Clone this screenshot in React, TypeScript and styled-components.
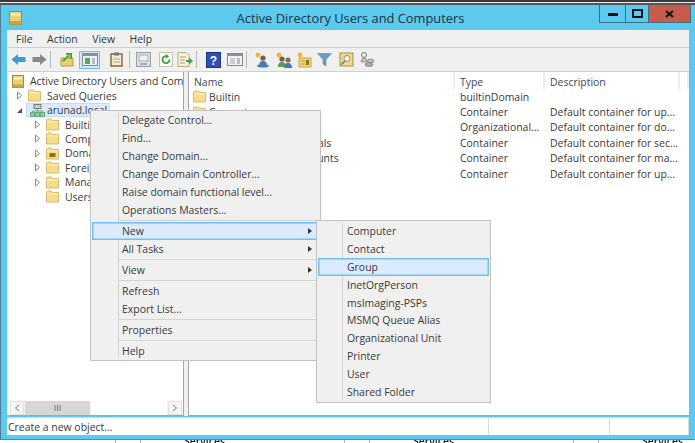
import React from "react";
import styled, { createGlobalStyle } from "styled-components";

const Global = createGlobalStyle`
  html, body { margin: 0; padding: 0; background: #fff; overflow: hidden; }
  * { box-sizing: border-box; }
`;

const Page = styled.div`
  position: relative;
  width: 695px;
  height: 443px;
  display: flex;
  flex-direction: column;
  overflow: hidden;
  filter: blur(0.55px);
  font-family: "Open Sans", "Noto Sans", sans-serif;
  font-size: 10.45px;
  color: #333;
`;
const TopStrip = styled.div`
  height: 5px;
  flex: none;
  background: linear-gradient(#3a3a3a 0 2px, #e8e8e8 2px 3px, #555 3px 5px);
`;
const BottomStrip = styled.div`
  height: 3px;
  flex: none;
  display: grid;
  grid-template-columns: repeat(3, 229px);
  padding-left: 115px;
  background: #fff;
  overflow: hidden;
`;
const StripCell = styled.div`
  border-left: 1px solid #b5b5b5;
`;
const StripInner = styled.div`
  margin-left: 24px;
  padding-left: 43px;
  height: 14px;
  margin-top: -6px;
  line-height: 14px;
  border-left: 1px solid #b5b5b5;
  color: #222;
  font-weight: 600;
`;
const Window = styled.div`
  flex: 1;
  min-height: 0;
  display: flex;
  flex-direction: column;
  background: #5ccaee;
  border-left: 1px solid #4a7f95;
  border-right: 1px solid #5ccaee;
  border-bottom: 1px solid #4a8ea8;
  padding: 0 5px 4px 6px;
`;
const TitleBar = styled.div`
  position: relative;
  height: 25px;
  flex: none;
  display: flex;
  align-items: center;
  justify-content: center;
  padding-left: 5px;
  font-size: 12.85px;
  color: #17323f;
`;
const AppIcon = styled.svg`
  position: absolute;
  left: 2px;
  top: 6px;
`;
const Controls = styled.div`
  position: absolute;
  right: -2px;
  top: 0;
  height: 18px;
  display: flex;
  border: 1px solid #3e6f84;
  border-top: none;
`;
const Control = styled.div<{ $w: number; $red?: boolean }>`
  width: ${(p) => p.$w}px;
  display: flex;
  align-items: center;
  justify-content: center;
  background: ${(p) => (p.$red ? "#c65b4e" : "transparent")};
  & + & { border-left: 1px solid #3e6f84; }
`;
const MenuBar = styled.div`
  height: 18px;
  flex: none;
  display: flex;
  align-items: center;
  gap: 14.5px;
  padding-left: 9px;
  background: #f0f0f0;
  border-bottom: 1px solid #cfcfcf;
  color: #2f3a40;
`;
const Toolbar = styled.div`
  height: 24px;
  flex: none;
  display: flex;
  align-items: center;
  padding-left: 1px;
  background: #f0f0f0;
  border-bottom: 1px solid #d0d0d0;
`;
const ToolSlot = styled.div<{ $m?: number; $active?: boolean }>`
  width: 21px;
  height: 18px;
  flex: none;
  margin-left: ${(p) => p.$m ?? 0}px;
  display: flex;
  align-items: center;
  justify-content: center;
  background: ${(p) => (p.$active ? "#d5e6f6" : "transparent")};
  border: ${(p) => (p.$active ? "1.5px solid #74bce8" : "none")};
`;
const ToolSep = styled.div<{ $m?: number }>`
  width: 1px;
  height: 17px;
  flex: none;
  margin-left: ${(p) => p.$m ?? 0}px;
  background: #b9b9b9;
`;
const Panes = styled.div`
  flex: 1;
  min-height: 0;
  display: flex;
  gap: 4px;
  background: #f0f0f0;
`;
const LeftPane = styled.div`
  width: 177px;
  flex: none;
  display: flex;
  flex-direction: column;
  background: #fff;
  border-right: 1px solid #a6a6a6;
  border-bottom: 1px solid #a6a6a6;
`;
const Tree = styled.div`
  flex: 1;
  padding-top: 2px;
`;
const TreeRow = styled.div<{ $indent: number }>`
  height: 14.45px;
  display: flex;
  align-items: center;
  padding-left: ${(p) => p.$indent}px;
  white-space: nowrap;
  overflow: hidden;
  svg { flex: none; }
`;
const Expander = styled.div`
  width: 15px;
  flex: none;
  display: flex;
  justify-content: center;
  padding-right: 2px;
`;
const TreeLabel = styled.span`
  margin-left: 6px;
  color: #3a3a3a;
`;
const SelectedNode = styled.div`
  display: flex;
  align-items: center;
  height: 14px;
  width: 84px;
  flex: none;
  margin-left: -2px;
  padding-left: 3px;
  background: #dbe9fb;
  border: 1px solid #c3dcf6;
`;
const NodeLabel = styled.span`
  margin-left: 2px;
  color: #3a3a3a;
`;
const HScroll = styled.div`
  height: 14px;
  flex: none;
  display: flex;
  align-items: stretch;
  gap: 1px;
  margin: 0 1px 0 3px;
  background: #f2f2f2;
`;
const ScrollArrow = styled.div`
  width: 14px;
  display: flex;
  align-items: center;
  justify-content: center;
  background: #f6f6f6;
  border: 1px solid #e2e2e2;
`;
const ScrollThumb = styled.div`
  width: 65px;
  display: flex;
  align-items: center;
  justify-content: center;
  background: #d6d6d6;
`;
const ScrollTrack = styled.div`
  flex: 1;
  background: #fff;
`;
const RightPane = styled.div`
  flex: 1;
  min-width: 0;
  display: flex;
  flex-direction: column;
  background: #fff;
  border-left: 1px solid #a6a6a6;
  border-bottom: 1px solid #a6a6a6;
`;
const HeaderRow = styled.div`
  height: 17px;
  flex: none;
  display: grid;
  grid-template-columns: 266px 90px 135px 1fr;
  color: #3c4a55;
`;
const HeaderCell = styled.div`
  display: flex;
  align-items: center;
  padding: 2px 0 0 5px;
  border-right: 2px solid #eeeeee;
`;
const ListRow = styled.div`
  height: 15.4px;
  display: grid;
  grid-template-columns: 266px 90px 1fr;
  align-items: center;
  white-space: nowrap;
`;
const NameCell = styled.div`
  display: flex;
  align-items: center;
  padding-left: 4px;
  overflow: hidden;
  svg { flex: none; }
`;
const NameLabel = styled.span`
  margin-left: 3px;
  color: #3a3a3a;
`;
const PlainCell = styled.div`
  padding-left: 5px;
  color: #3a3a3a;
  overflow: hidden;
`;
const StatusBar = styled.div`
  height: 18px;
  flex: none;
  margin-top: 1px;
  display: grid;
  grid-template-columns: 482px 121px 1fr;
  background: #fff;
  border-top: 1px solid #d8d8d8;
`;
const StatusCell = styled.div`
  display: flex;
  align-items: center;
  padding-left: 1px;
  border-right: 1px solid #dcdcdc;
  color: #3a3a3a;
`;
const Menu = styled.div<{ $x: number; $y: number; $w: number; $gutter: number; $pad: number }>`
  position: absolute;
  left: ${(p) => p.$x}px;
  top: ${(p) => p.$y}px;
  width: ${(p) => p.$w}px;
  padding: ${(p) => p.$pad}px 1px;
  background: #f0f0f0;
  border: 1.5px solid #c2c2c2;
  &::before {
    content: "";
    position: absolute;
    top: 2px;
    bottom: 2px;
    left: ${(p) => p.$gutter}px;
    width: 1px;
    background: #d2d2d2;
  }
`;
const MenuItem = styled.div<{ $on?: boolean; $h: number; $text: number }>`
  position: relative;
  height: ${(p) => p.$h}px;
  display: flex;
  align-items: center;
  justify-content: space-between;
  padding: 0 7px 0 ${(p) => p.$text}px;
  background: ${(p) => (p.$on ? "#dbeafc" : "transparent")};
  box-shadow: ${(p) => (p.$on ? "inset 0 0 0 1.5px #74c0f2" : "none")};
  color: #3a3a3a;
  white-space: nowrap;
`;
const MenuSep = styled.div<{ $gutter: number }>`
  height: 3px;
  margin-left: ${(p) => p.$gutter}px;
  display: flex;
  align-items: center;
  &::after {
    content: "";
    flex: 1;
    height: 1.5px;
    background: #d4d4d4;
  }
`;
const Arrow = styled.span`
  width: 0;
  height: 0;
  border-left: 4px solid #333;
  border-top: 3px solid transparent;
  border-bottom: 3px solid transparent;
`;

const Folder = ({ lock }: { lock?: boolean }) => (
  <svg width="13" height="13" viewBox="0 0 13 13">
    <path d="M0.5 3V12H12.5V2.5H6.5L5.5 1H1.5L0.5 2Z" fill="#f7dc8c" stroke="#d8bb6c" />
    <path d="M1 4H12" stroke="#fdf0c2" />
    {lock && <rect x="3.5" y="6" width="6" height="4" fill="#8a7320" />}
  </svg>
);
const Tri = ({ filled }: { filled?: boolean }) => (
  <svg width="7" height="9" viewBox="0 0 7 9">
    {filled ? (
      <path d="M6 2V7H1Z" fill="#555" />
    ) : (
      <path d="M1.5 1L5.5 4.5L1.5 8Z" fill="#fff" stroke="#8a8a8a" />
    )}
  </svg>
);
const BookIcon = () => (
  <svg width="12" height="13" viewBox="0 0 12 13">
    <rect x="0.5" y="0.5" width="11" height="12" fill="#eccf72" stroke="#a58c3c" />
    <rect x="2" y="2.5" width="8" height="2" fill="#fdf4c8" />
    <rect x="0.5" y="9.5" width="11" height="3" fill="#c4a447" />
  </svg>
);
const DomainIcon = () => (
  <svg width="15" height="13" viewBox="0 0 15 13">
    <rect x="4" y="0.5" width="7" height="4" fill="#c9ced2" stroke="#777" />
    <path d="M7.5 4.5V7M2.5 9V7H12.5V9" stroke="#6a7" fill="none" />
    <rect x="0.5" y="8.5" width="4" height="4" fill="#9ccf7a" stroke="#6a8" />
    <rect x="5.5" y="8.5" width="4" height="4" fill="#9ccf7a" stroke="#6a8" />
    <rect x="10.5" y="8.5" width="4" height="4" fill="#9ccf7a" stroke="#6a8" />
  </svg>
);
const BackArrow = ({ color, flip }: { color: string; flip?: boolean }) => (
  <svg width="15" height="13" viewBox="0 0 15 13" style={flip ? { transform: "scaleX(-1)" } : undefined}>
    <path d="M0.5 6.5L7 1V4H14.5V9H7V12Z" fill={color} />
  </svg>
);
const UpFolder = () => (
  <svg width="15" height="15" viewBox="0 0 15 15">
    <path d="M1 6H13V14H1Z" fill="#e9cf6e" stroke="#b69a3f" />
    <path d="M3 9L9 3.5M6 2H11V7" stroke="#5aa02c" strokeWidth="2" fill="none" />
  </svg>
);
const PaneIcon = ({ green }: { green?: boolean }) => (
  <svg width="16" height="13" viewBox="0 0 16 13">
    <rect x="0.5" y="0.5" width="15" height="12" fill="#f2f2f2" stroke="#8b8b8b" />
    <rect x="1" y="1" width="14" height="2" fill="#8b9199" />
    <rect x="3" y="5" width="5" height="6" fill={green ? "#58a85a" : "#c8d0d8"} />
    <rect x="10" y="5" width="3" height="6" fill="#b5bcc4" />
  </svg>
);
const Clipboard = () => (
  <svg width="13" height="15" viewBox="0 0 13 15">
    <rect x="1" y="2" width="11" height="12" fill="#f4e9d3" stroke="#8a6a3d" strokeWidth="1.5" />
    <rect x="4" y="0.5" width="5" height="3" fill="#6f7a80" />
    <path d="M3 7H10M3 10H10" stroke="#b7a98f" />
  </svg>
);
const PropsIcon = () => (
  <svg width="15" height="15" viewBox="0 0 15 15">
    <rect x="0.5" y="0.5" width="14" height="14" fill="#dadee1" stroke="#9a9fa3" />
    <rect x="3" y="3" width="9" height="6" fill="#eef0f1" stroke="#aab" />
    <path d="M4 12H11" stroke="#7aa6c6" strokeWidth="1.5" />
  </svg>
);
const RefreshIcon = () => (
  <svg width="14" height="15" viewBox="0 0 14 15">
    <rect x="0.5" y="0.5" width="13" height="14" fill="#fbfbf4" stroke="#c4c4b4" />
    <path d="M10.5 7.5A3.5 3.5 0 1 1 8 4.2" fill="none" stroke="#3e9c3e" strokeWidth="1.8" />
    <path d="M7 2L10 4.5L7 6.5Z" fill="#3e9c3e" />
  </svg>
);
const ExportIcon = () => (
  <svg width="16" height="15" viewBox="0 0 16 15">
    <path d="M1 0.5H9L12 3.5V14.5H1Z" fill="#f8f3dc" stroke="#b9ad85" />
    <path d="M3 5H9M3 8H8M3 11H8" stroke="#a79f80" />
    <path d="M9 8H12V5.5L16 9L12 12.5V10H9Z" fill="#3fa53f" />
  </svg>
);
const HelpIcon = () => (
  <svg width="15" height="16" viewBox="0 0 15 16">
    <rect x="0.5" y="0.5" width="14" height="15" fill="#2c4fb0" stroke="#1b3488" />
    <text x="7.5" y="12.5" textAnchor="middle" fontSize="12" fontWeight="700" fill="#fff" fontFamily="Liberation Sans, sans-serif">?</text>
  </svg>
);
const Person = ({ x, y, shirt, head }: { x: number; y: number; shirt: string; head: string }) => (
  <g transform={`translate(${x} ${y})`}>
    <circle cx="4" cy="3" r="2.6" fill={head} />
    <path d="M0 11C0 7 2 6 4 6S8 7 8 11Z" fill={shirt} />
  </g>
);
const UserIcon = () => (
  <svg width="16" height="16" viewBox="0 0 16 16">
    <circle cx="3" cy="3" r="2.4" fill="#f2b33d" />
    <Person x={4} y={3} shirt="#3f7fb5" head="#7a5c3e" />
    <ellipse cx="8" cy="14" rx="6" ry="1.6" fill="#3f7fb5" />
  </svg>
);
const GroupIcon = () => (
  <svg width="16" height="16" viewBox="0 0 16 16">
    <circle cx="3" cy="3" r="2.4" fill="#f2b33d" />
    <Person x={2} y={4} shirt="#5c9c4e" head="#7a5c3e" />
    <Person x={8} y={5} shirt="#3f7fb5" head="#8a6c4e" />
  </svg>
);
const OuIcon = () => (
  <svg width="16" height="16" viewBox="0 0 16 16">
    <circle cx="3" cy="3" r="2.4" fill="#f2b33d" />
    <path d="M2 6H14V15H2Z" fill="#f3d873" stroke="#c2a544" />
    <rect x="9" y="8" width="3" height="5" fill="#8a7320" />
    <path d="M4 9H8M4 12H8" stroke="#b79c3f" />
  </svg>
);
const FilterIcon = () => (
  <svg width="15" height="15" viewBox="0 0 15 15">
    <path d="M0.5 1.5H14.5L9 7.5V14L6 12V7.5Z" fill="#6d9cc0" stroke="#5b88aa" strokeWidth="0.6" />
  </svg>
);
const FindIcon = () => (
  <svg width="15" height="15" viewBox="0 0 15 15">
    <rect x="1" y="1" width="13" height="13" fill="#efd98c" stroke="#a68f3f" />
    <circle cx="8" cy="6.5" r="3" fill="#fbf7e2" stroke="#8f8f7a" />
    <path d="M6 9L2.5 12.5" stroke="#7a7a68" strokeWidth="1.6" />
  </svg>
);
const GrayUsers = () => (
  <svg width="15" height="15" viewBox="0 0 15 15">
    <circle cx="4" cy="3" r="2.5" fill="none" stroke="#777" />
    <path d="M1 10C1 7 2.5 6 4 6S7 7 7 10Z" fill="#bdbdbd" stroke="#777" strokeWidth="0.6" />
    <ellipse cx="10.5" cy="9" rx="3.5" ry="2" fill="#bdbdbd" stroke="#777" strokeWidth="0.6" />
    <ellipse cx="9" cy="12.5" rx="4" ry="2" fill="#aaa" stroke="#777" strokeWidth="0.6" />
  </svg>
);

const treeChildren = [
  { label: "Builtin", exp: true },
  { label: "Computers", exp: true },
  { label: "Domain Controllers", exp: true, lock: true },
  { label: "ForeignSecurityPrincipals", exp: true },
  { label: "Managed Service Accounts", exp: true },
  { label: "Users", exp: false },
];
const rows = [
  { name: "Builtin", type: "builtinDomain", desc: "" },
  { name: "Computers", type: "Container", desc: "Default container for up..." },
  { name: "Domain Controllers", type: "Organizational...", desc: "Default container for do..." },
  { name: "ForeignSecurityPrincipals", type: "Container", desc: "Default container for sec..." },
  { name: "Managed Service Accounts", type: "Container", desc: "Default container for ma..." },
  { name: "Users", type: "Container", desc: "Default container for up..." },
];
type Entry = { t: string; on?: boolean; sub?: boolean } | "sep";
const mainMenu: Entry[] = [
  { t: "Delegate Control..." },
  { t: "Find..." },
  { t: "Change Domain..." },
  { t: "Change Domain Controller..." },
  { t: "Raise domain functional level..." },
  { t: "Operations Masters..." },
  "sep",
  { t: "New", on: true, sub: true },
  { t: "All Tasks", sub: true },
  "sep",
  { t: "View", sub: true },
  "sep",
  { t: "Refresh" },
  { t: "Export List..." },
  "sep",
  { t: "Properties" },
  "sep",
  { t: "Help" },
];
const subMenu: Entry[] = [
  { t: "Computer" },
  { t: "Contact" },
  { t: "Group", on: true },
  { t: "InetOrgPerson" },
  { t: "msImaging-PSPs" },
  { t: "MSMQ Queue Alias" },
  { t: "Organizational Unit" },
  { t: "Printer" },
  { t: "User" },
  { t: "Shared Folder" },
];

const renderMenu = (items: Entry[], h: number, text: number, gutter: number) =>
  items.map((it, i) =>
    it === "sep" ? (
      <MenuSep key={i} $gutter={gutter} />
    ) : (
      <MenuItem key={i} $on={it.on} $h={h} $text={text}>
        <span>{it.t}</span>
        {it.sub && <Arrow />}
      </MenuItem>
    )
  );

export default function App() {
  return (
    <Page>
      <Global />
      <TopStrip />
      <Window>
        <TitleBar>
          <AppIcon width="13" height="14" viewBox="0 0 13 14">
            <rect x="0.5" y="0.5" width="12" height="13" fill="#eccf72" stroke="#a58c3c" />
            <rect x="2" y="2.5" width="9" height="2" fill="#fdf4c8" />
            <rect x="0.5" y="10" width="12" height="3.5" fill="#c4a447" />
          </AppIcon>
          Active Directory Users and Computers
          <Controls>
            <Control $w={25}>
              <svg width="10" height="4" viewBox="0 0 10 4"><rect width="10" height="3" y="1" fill="#111" /></svg>
            </Control>
            <Control $w={23}>
              <svg width="11" height="9" viewBox="0 0 11 9"><rect x="1" y="1" width="9" height="7" fill="none" stroke="#111" strokeWidth="2" /></svg>
            </Control>
            <Control $w={42} $red>
              <svg width="9" height="8" viewBox="0 0 9 8"><path d="M1 1L8 7M8 1L1 7" stroke="#111" strokeWidth="2" /></svg>
            </Control>
          </Controls>
        </TitleBar>
        <MenuBar>
          <span>File</span>
          <span>Action</span>
          <span>View</span>
          <span>Help</span>
        </MenuBar>
        <Toolbar>
          <ToolSlot><BackArrow color="#3a9bdc" /></ToolSlot>
          <ToolSlot><BackArrow color="#8a8a8a" flip /></ToolSlot>
          <ToolSep />
          <ToolSlot $m={6}><UpFolder /></ToolSlot>
          <ToolSlot $m={1} $active><PaneIcon green /></ToolSlot>
          <ToolSlot $m={6}><Clipboard /></ToolSlot>
          <ToolSep $m={2} />
          <ToolSlot $m={3}><PropsIcon /></ToolSlot>
          <ToolSlot $m={1}><RefreshIcon /></ToolSlot>
          <ToolSlot $m={-2}><ExportIcon /></ToolSlot>
          <ToolSep $m={1} />
          <ToolSlot $m={6}><HelpIcon /></ToolSlot>
          <ToolSlot><PaneIcon /></ToolSlot>
          <ToolSep $m={1} />
          <ToolSlot $m={5}><UserIcon /></ToolSlot>
          <ToolSlot><GroupIcon /></ToolSlot>
          <ToolSlot><OuIcon /></ToolSlot>
          <ToolSlot $m={-1}><FilterIcon /></ToolSlot>
          <ToolSlot $m={1}><FindIcon /></ToolSlot>
          <ToolSlot><GrayUsers /></ToolSlot>
        </Toolbar>
        <Panes>
          <LeftPane>
            <Tree>
              <TreeRow $indent={5}>
                <BookIcon />
                <TreeLabel>Active Directory Users and Com</TreeLabel>
              </TreeRow>
              <TreeRow $indent={6}>
                <Expander><Tri /></Expander>
                <Folder />
                <TreeLabel>Saved Queries</TreeLabel>
              </TreeRow>
              <TreeRow $indent={6}>
                <Expander><Tri filled /></Expander>
                <SelectedNode>
                  <DomainIcon />
                  <NodeLabel>arunad.local</NodeLabel>
                </SelectedNode>
              </TreeRow>
              {treeChildren.map((c) => (
                <TreeRow $indent={24} key={c.label}>
                  <Expander>{c.exp && <Tri />}</Expander>
                  <Folder lock={c.lock} />
                  <TreeLabel>{c.label}</TreeLabel>
                </TreeRow>
              ))}
            </Tree>
            <HScroll>
              <ScrollArrow>
                <svg width="6" height="8" viewBox="0 0 6 8"><path d="M5 1L1.5 4L5 7" fill="none" stroke="#777" /></svg>
              </ScrollArrow>
              <ScrollThumb>
                <svg width="7" height="6" viewBox="0 0 7 6"><path d="M1 0V6M3.5 0V6M6 0V6" stroke="#777" /></svg>
              </ScrollThumb>
              <ScrollTrack />
              <ScrollArrow>
                <svg width="6" height="8" viewBox="0 0 6 8"><path d="M1 1L4.5 4L1 7" fill="none" stroke="#777" /></svg>
              </ScrollArrow>
            </HScroll>
          </LeftPane>
          <RightPane>
            <HeaderRow>
              <HeaderCell>Name</HeaderCell>
              <HeaderCell>Type</HeaderCell>
              <HeaderCell>Description</HeaderCell>
              <HeaderCell />
            </HeaderRow>
            {rows.map((r) => (
              <ListRow key={r.name}>
                <NameCell><Folder /><NameLabel>{r.name}</NameLabel></NameCell>
                <PlainCell>{r.type}</PlainCell>
                <PlainCell>{r.desc}</PlainCell>
              </ListRow>
            ))}
          </RightPane>
        </Panes>
        <StatusBar>
          <StatusCell>Create a new object...</StatusCell>
          <StatusCell />
          <StatusCell />
        </StatusBar>
      </Window>
      <BottomStrip>
        {[0, 1, 2].map((i) => (
          <StripCell key={i}>
            <StripInner>Services</StripInner>
          </StripCell>
        ))}
      </BottomStrip>
      <Menu $x={90} $y={110} $w={231} $gutter={27} $pad={0}>
        {renderMenu(mainMenu, 18, 30, 27)}
      </Menu>
      <Menu $x={316} $y={220} $w={175} $gutter={25} $pad={1}>
        {renderMenu(subMenu, 17.9, 29, 25)}
      </Menu>
    </Page>
  );
}
